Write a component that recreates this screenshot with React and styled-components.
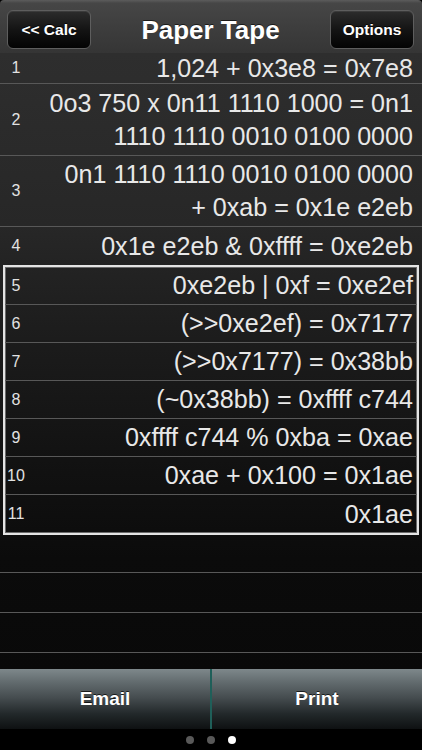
import React from 'react'
import styled, { createGlobalStyle } from 'styled-components'

const GlobalStyle = createGlobalStyle`
  html, body {
    margin: 0;
    padding: 0;
    background: #000;
  }
  body {
    font-family: "Liberation Sans", Arial, sans-serif;
  }
`;

const Screen = styled.div`
  width: 422px;
  height: 750px;
  display: flex;
  flex-direction: column;
  overflow: hidden;
  background: #000;
`;

const Header = styled.div`
  height: 53px;
  box-sizing: border-box;
  padding: 10px 8px 4px 7px;
  display: grid;
  grid-template-columns: 84px 1fr 84px;
  align-items: start;
  background: linear-gradient(180deg, #5c5c5c 0%, #464646 6%, #3c3c3c 60%, #353535 100%);
  border-radius: 4px 4px 0 0;
`;

const NavButton = styled.div`
  height: 39px;
  box-sizing: border-box;
  border: 1px solid #5e5e5e;
  border-radius: 6px;
  background: linear-gradient(180deg, #2c2c2c 0%, #141414 50%, #030303 100%);
  box-shadow: inset 0 1px 0 rgba(255, 255, 255, 0.08);
  color: #fff;
  font-weight: bold;
  font-size: 15.5px;
  display: flex;
  align-items: center;
  justify-content: center;
  text-shadow: 0 -1px 0 rgba(0, 0, 0, 0.8);
`;

const Title = styled.div`
  color: #fff;
  font-weight: bold;
  font-size: 26px;
  text-align: center;
  line-height: 40px;
  text-shadow: 0 -1px 0 rgba(0, 0, 0, 0.6);
`;

const Tape = styled.div`
  flex: 1;
  display: flex;
  flex-direction: column;
  overflow: hidden;
  background: linear-gradient(180deg, #2e2e2e 0%, #272727 28%, #1b1b1b 48%, #121212 66%, #0b0b0b 82%, #090909 100%);
`;

const Row = styled.div`
  height: ${p => p.$h}px;
  flex-shrink: 0;
  box-sizing: border-box;
  display: flex;
  align-items: center;
  border-bottom: ${p => (p.$last ? 'none' : '1px solid #585858')};
  padding-right: ${p => (p.$boxed ? 4 : 9)}px;
`;

const Num = styled.div`
  width: ${p => (p.$boxed ? 22 : 32)}px;
  flex-shrink: 0;
  text-align: center;
  color: #e2e2e2;
  font-size: 16px;
`;

const Expr = styled.div`
  flex: 1;
  text-align: right;
  color: #e8e8e8;
  font-size: 25.1px;
  line-height: 33px;
  white-space: nowrap;
`;

const Selection = styled.div`
  margin: 0 3px;
  flex-shrink: 0;
  border: 2px solid #e4e4e4;
  box-shadow: inset 0 0 0 1px #6a6a6a;
  display: flex;
  flex-direction: column;
`;

const BottomBar = styled.div`
  height: 60px;
  flex-shrink: 0;
  display: flex;
`;

const BarButton = styled.div`
  flex: 1;
  display: flex;
  align-items: center;
  justify-content: center;
  color: #fff;
  font-weight: bold;
  font-size: 19px;
  text-shadow: 0 -1px 0 rgba(0, 0, 0, 0.7);
  background: linear-gradient(180deg, #7e888b 0%, #626b6e 22%, #454c4f 48%, #22282a 75%, #0e1112 100%);
`;

const Divider = styled.div`
  width: 2px;
  background: #1f5f59;
`;

const Dots = styled.div`
  height: 21px;
  flex-shrink: 0;
  display: flex;
  align-items: center;
  justify-content: center;
  gap: 13px;
  background: #000;
`;

const Dot = styled.div`
  width: 8px;
  height: 8px;
  border-radius: 50%;
  background: ${p => (p.$active ? '#fff' : '#595959')};
`;

const topRows = [
  { n: 1, h: 31, lines: ['1,024 + 0x3e8 = 0x7e8'] },
  { n: 2, h: 72, lines: ['0o3 750 x 0n11 1110 1000 = 0n1', '1110 1110 0010 0100 0000'] },
  { n: 3, h: 71, lines: ['0n1 1110 1110 0010 0100 0000', '+ 0xab = 0x1e e2eb'] },
  { n: 4, h: 38, lines: ['0x1e e2eb & 0xffff = 0xe2eb'], last: true },
];

const boxRows = [
  { n: 5, text: '0xe2eb | 0xf = 0xe2ef' },
  { n: 6, text: '(>>0xe2ef) = 0x7177' },
  { n: 7, text: '(>>0x7177) = 0x38bb' },
  { n: 8, text: '(~0x38bb) = 0xffff c744' },
  { n: 9, text: '0xffff c744 % 0xba = 0xae' },
  { n: 10, text: '0xae + 0x100 = 0x1ae' },
  { n: 11, text: '0x1ae' },
];

const emptyRows = [38, 40, 40];

export default function App() {
  return (
    <>
      <GlobalStyle />
      <Screen>
        <Header>
          <NavButton>&lt;&lt; Calc</NavButton>
          <Title>Paper Tape</Title>
          <NavButton>Options</NavButton>
        </Header>
        <Tape>
          {topRows.map(r => (
            <Row key={r.n} $h={r.h} $last={r.last}>
              <Num>{r.n}</Num>
              <Expr>
                {r.lines.map((l, i) => (
                  <div key={i}>{l}</div>
                ))}
              </Expr>
            </Row>
          ))}
          <Selection>
            {boxRows.map((r, i) => (
              <Row key={r.n} $h={38} $boxed $last={i === boxRows.length - 1}>
                <Num $boxed>{r.n}</Num>
                <Expr>{r.text}</Expr>
              </Row>
            ))}
          </Selection>
          {emptyRows.map((h, i) => (
            <Row key={i} $h={h} />
          ))}
        </Tape>
        <BottomBar>
          <BarButton>Email</BarButton>
          <Divider />
          <BarButton>Print</BarButton>
        </BottomBar>
        <Dots>
          <Dot />
          <Dot />
          <Dot $active />
        </Dots>
      </Screen>
    </>
  );
}
